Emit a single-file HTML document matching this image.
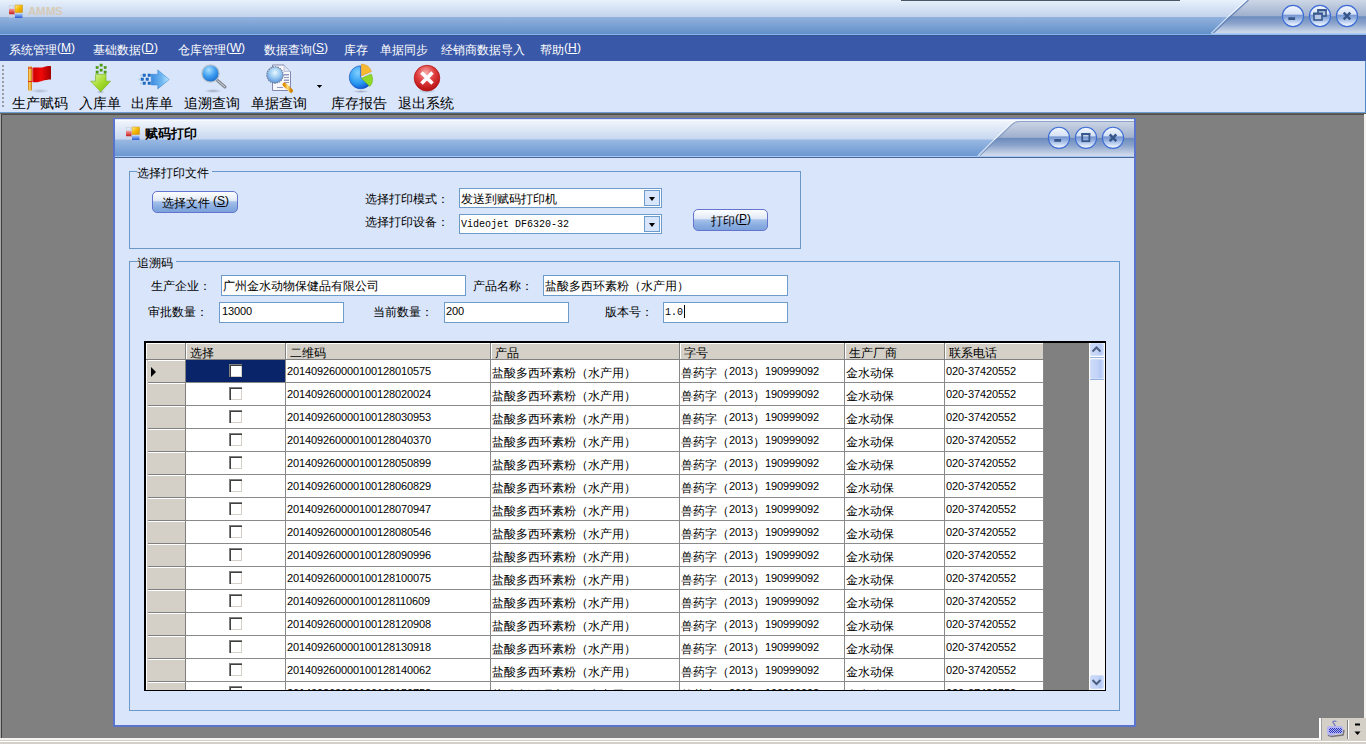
<!DOCTYPE html>
<html><head><meta charset="utf-8">
<style>
@font-face{font-family:"Liberation Sans";src:local("Liberation Sans"),local("LiberationSans");unicode-range:U+0000-2FFF;font-weight:400}
@font-face{font-family:"Liberation Sans";src:local("Liberation Sans"),local("LiberationSans");unicode-range:U+3000-303F,U+4E00-9FFF,U+FF00-FFEF;size-adjust:133%;font-weight:400}
@font-face{font-family:"Liberation Sans";src:local("Liberation Sans Bold"),local("LiberationSans-Bold");unicode-range:U+0000-2FFF;font-weight:700}
@font-face{font-family:"Liberation Sans";src:local("Liberation Sans Bold"),local("LiberationSans-Bold");unicode-range:U+3000-303F,U+4E00-9FFF,U+FF00-FFEF;size-adjust:133%;font-weight:700}
*{margin:0;padding:0;box-sizing:border-box}
html,body{width:1366px;height:744px;overflow:hidden;background:#808080;font-family:"Liberation Sans",sans-serif;font-size:12px;color:#000}
.a{position:absolute}
#title{left:0;top:0;width:1366px;height:34px;background:linear-gradient(#E8F1FC 0px,#C4D4EC 16.5px,#92B2DE 17px,#6290C8 34px)}
#tline1{left:0;top:34px;width:1366px;height:1px;background:#80B6F6}
#tline2{left:0;top:35px;width:1366px;height:1px;background:#3C5488}
#menu{left:0;top:36px;width:1366px;height:25px;background:#3A58A8;color:#fff}
#menu>span{position:absolute;top:8px;white-space:nowrap;font-size:12px;line-height:12px}
#tool{left:0;top:61px;width:1366px;height:51px;background:#D9E5FA}
#tline3{left:0;top:112px;width:1366px;height:1px;background:#6C9CD0}
#tline4{left:0;top:113px;width:1366px;height:2px;background:linear-gradient(#6C6A66,#454545)}
.tl{position:absolute;top:96px;font-size:14px;line-height:14px;white-space:nowrap}
#form{left:113px;top:118px;width:1023px;height:609px;background:#D9E5FA;border:2px solid #5A74CE;border-top:1px solid #5A74CE}
#ftitle{left:115px;top:120px;width:1019px;height:36px;background:linear-gradient(#F2F6FD 0px,#C8D8F0 19px,#98B8E2 20px,#6C98D2 36px)}
.gb{position:absolute;border:1px solid #6A98C8}
.gt{position:absolute;background:#D9E5FA;padding:0 3px 0 0;font-size:12px;line-height:12px;white-space:nowrap}
.lbl{position:absolute;font-size:12px;line-height:12px;white-space:nowrap}
.tb{position:absolute;background:#fff;border:1px solid #6D9BCB;font-size:12px;line-height:12px;padding:4px 0 0 1px;white-space:nowrap}
.dd{width:16px;height:16px;background:#D9E5FA;border:1px solid #6D9BCB}
.dd::after{content:"";position:absolute;left:4px;top:6px;border-left:3.5px solid transparent;border-right:3.5px solid transparent;border-top:4px solid #000}
.btn{position:absolute;border:1px solid #6474CC;border-radius:5px;background:linear-gradient(#FDFEFF 0%,#E2EAF6 42%,#A4C0EA 50%,#88ACE0 78%,#7CA2DC 100%);font-size:12px;line-height:12px;text-align:center;white-space:nowrap}
#grid{left:144px;top:341px;width:962px;height:350px;background:#808080;border-top:2px solid #000;border-left:2px solid #000;border-right:1px solid #000;border-bottom:1px solid #000;overflow:hidden}
.gh{font-size:12px;line-height:12px;white-space:nowrap}
.as{position:relative;top:-2px}
.gd{font-size:12px;line-height:12px;white-space:nowrap}
.gd .n{position:relative;top:-2px}
.n{font-size:10.8px}
.cb{width:13px;height:13px;background:#fff;border-top:1px solid #808080;border-left:1px solid #808080;box-shadow:inset 1px 1px 0 #404040,inset -1px -1px 0 #D4D0C8}
.arrowsel{width:0;height:0;border-top:5px solid transparent;border-bottom:5px solid transparent;border-left:5px solid #000}
.sbb{border-radius:2px;background:linear-gradient(90deg,#CCDAF8,#C4D4F8 50%,#B4CAF4 80%,#C8DAFC);border:1px solid #D0DEF8}
</style></head><body>
<div class="a" id="title"></div>
<div class="a" id="tline1"></div>
<div class="a" id="tline2"></div>
<svg class="a" style="left:0;top:0" width="1366" height="36">
<defs><linearGradient id="icOr" x1="0" y1="0" x2="1" y2="1"><stop offset="0" stop-color="#FFF0A0"/><stop offset=".5" stop-color="#F4B800"/><stop offset="1" stop-color="#D89000"/></linearGradient><linearGradient id="icBl" x1="0" y1="0" x2="0" y2="1"><stop offset="0" stop-color="#A8CCFF"/><stop offset="1" stop-color="#2858D0"/></linearGradient><linearGradient id="icRd" x1="0" y1="0" x2="0" y2="1"><stop offset="0" stop-color="#F89898"/><stop offset="1" stop-color="#C01818"/></linearGradient><linearGradient id="mgbtn" x1="0" y1="0" x2="0" y2="1"><stop offset="0" stop-color="#F4F8FE"/><stop offset=".42" stop-color="#D4E0F4"/><stop offset=".45" stop-color="#7494D0"/><stop offset=".62" stop-color="#94B0E0"/><stop offset=".86" stop-color="#D8E4F8"/><stop offset="1" stop-color="#FAFCFF"/></linearGradient>
<linearGradient id="mgtab" x1="0" y1="0" x2="0" y2="1"><stop offset="0" stop-color="#CDD7E6"/><stop offset=".47" stop-color="#A0B0CE"/><stop offset=".5" stop-color="#6C8CBE"/><stop offset=".7" stop-color="#8CA4CC"/><stop offset=".95" stop-color="#CAD6E8"/><stop offset="1" stop-color="#D0DCEC"/></linearGradient></defs>
<rect x="901" y="0" width="279" height="1" fill="#4A5868"/>
<path d="M1247.5 0 H1366 V33.5 H1212 Q1229 16 1247.5 0 Z" fill="url(#mgtab)"/>
<path d="M1246.5 0 Q1228 16 1211 33.5" fill="none" stroke="#F8FBFF" stroke-width="1"/>
<path d="M1248.5 0 Q1230 16.5 1213 33.5" fill="none" stroke="#5C7CB4" stroke-width="1.1" opacity=".85"/>
<rect x="1212" y="33" width="154" height="1.5" fill="#A8C8F4"/>
<circle cx="1293" cy="16" r="10.6" fill="url(#mgbtn)" stroke="#3C6CD4" stroke-width="1.1"/><rect x="1288.3" y="17.2" width="6.8" height="2.8" fill="#38588C"/><circle cx="1320" cy="16" r="10.6" fill="url(#mgbtn)" stroke="#3C6CD4" stroke-width="1.1"/><rect x="1318" y="10" width="8" height="6" fill="#B8C8E8" stroke="#38588C" stroke-width="1.6"/><rect x="1317.2" y="9.2" width="9.6" height="2" fill="#38588C"/><rect x="1314" y="13.5" width="8" height="6.5" fill="#B8C8E8" stroke="#38588C" stroke-width="1.6"/><rect x="1313.2" y="12.7" width="9.6" height="2" fill="#38588C"/><circle cx="1347" cy="16" r="10.6" fill="url(#mgbtn)" stroke="#3C6CD4" stroke-width="1.1"/><path d="M1343.7 12.7 L1350.3 19.3 M1350.3 12.7 L1343.7 19.3" stroke="#38588C" stroke-width="2.6"/>
<g transform="translate(9,5)"><rect x="0" y="0" width="14" height="14" fill="none"/><rect x="6" y="0" width="7.5" height="7.5" fill="url(#icOr)" stroke="#C89010" stroke-width=".5"/><rect x="6" y="8.5" width="7.5" height="4.5" fill="url(#icBl)"/><rect x="0" y="4" width="5.5" height="5.5" fill="url(#icRd)"/><rect x="0.5" y="0.5" width="4" height="3" fill="none" stroke="#C8CCD8" stroke-width=".6"/><rect x="0.5" y="9.5" width="4" height="3" fill="none" stroke="#C8CCD8" stroke-width=".6"/></g>
<text x="28" y="15" font-family="Liberation Sans" font-size="11" font-weight="bold" fill="#D6CAB6" textLength="34" lengthAdjust="spacingAndGlyphs">AMMS</text>
</svg><div class="a" id="menu">
<span style="left:9px">系统管理<span class="as">(<u>M</u>)</span></span>
<span style="left:93px">基础数据<span class="as">(<u>D</u>)</span></span>
<span style="left:178px">仓库管理<span class="as">(<u>W</u>)</span></span>
<span style="left:264px">数据查询<span class="as">(<u>S</u>)</span></span>
<span style="left:344px">库存</span>
<span style="left:380px">单据同步</span>
<span style="left:441px">经销商数据导入</span>
<span style="left:540px">帮助<span class="as">(<u>H</u>)</span></span>
</div>
<div class="a" id="tool"></div>
<div class="a" id="tline3"></div>
<div class="a" id="tline4"></div>
<svg class="a" style="left:0;top:0" width="460" height="112" viewBox="0 0 460 112">
<defs>
<linearGradient id="gpole" x1="0" x2="1"><stop offset="0" stop-color="#C87800"/><stop offset=".45" stop-color="#FFD870"/><stop offset="1" stop-color="#C87000"/></linearGradient>
<linearGradient id="gflag" x1="0" x2="1"><stop offset="0" stop-color="#F8A0A0"/><stop offset=".12" stop-color="#D00000"/><stop offset=".5" stop-color="#F00808"/><stop offset="1" stop-color="#A00000"/></linearGradient>
<radialGradient id="gshadow"><stop offset="0" stop-color="#8090A8" stop-opacity=".7"/><stop offset="1" stop-color="#8090A8" stop-opacity="0"/></radialGradient>
<linearGradient id="ggreen" x1="0" y1="0" x2="1" y2="1"><stop offset="0" stop-color="#D8F4A8"/><stop offset=".5" stop-color="#A8DC30"/><stop offset="1" stop-color="#70B800"/></linearGradient>
<linearGradient id="gblue" x1="0" x2="1"><stop offset="0" stop-color="#3C8CE0"/><stop offset=".6" stop-color="#70B8F0"/><stop offset="1" stop-color="#C0ECFF"/></linearGradient>
<radialGradient id="gglass" cx=".4" cy=".3" r=".8"><stop offset="0" stop-color="#A8E0FF"/><stop offset=".5" stop-color="#3C9CF0"/><stop offset="1" stop-color="#1060C0"/></radialGradient>
<radialGradient id="gglass2" cx=".5" cy=".35" r=".7"><stop offset="0" stop-color="#E8F8FF"/><stop offset=".5" stop-color="#98C8F0"/><stop offset="1" stop-color="#4C88D8"/></radialGradient>
<linearGradient id="ghandle" x1="0" x2="1"><stop offset="0" stop-color="#E09000"/><stop offset=".5" stop-color="#FFE080"/><stop offset="1" stop-color="#D08000"/></linearGradient>
<radialGradient id="gpie" cx=".4" cy=".3" r=".8"><stop offset="0" stop-color="#80D0FF"/><stop offset=".6" stop-color="#2898F0"/><stop offset="1" stop-color="#0848C8"/></radialGradient>
<radialGradient id="gred" cx=".45" cy=".3" r=".75"><stop offset="0" stop-color="#F8B0B0"/><stop offset=".45" stop-color="#E04040"/><stop offset="1" stop-color="#B00808"/></radialGradient>
</defs>
<!-- grip -->
<g fill="#9A9CA4"><rect x="2" y="65" width="2" height="2"/><rect x="2" y="69" width="2" height="2"/><rect x="2" y="73" width="2" height="2"/><rect x="2" y="77" width="2" height="2"/><rect x="2" y="81" width="2" height="2"/><rect x="2" y="85" width="2" height="2"/><rect x="2" y="89" width="2" height="2"/><rect x="2" y="93" width="2" height="2"/><rect x="2" y="97" width="2" height="2"/><rect x="2" y="101" width="2" height="2"/><rect x="2" y="105" width="2" height="2"/></g>
<!-- flag -->
<ellipse cx="40" cy="91" rx="10" ry="2.2" fill="url(#gshadow)" opacity=".7"/>
<path d="M31.5 68 C36 66.5 40 68.5 44 67 C47 66 49 66 51 66.2 L51 79.4 C48 79.5 45 79.8 42 81 C38 82.5 35 82.5 31.5 82 Z" fill="url(#gflag)"/>
<rect x="28" y="66" width="4" height="25" rx="2" fill="url(#gpole)"/>
<rect x="28" y="67.5" width="4" height="1" fill="#E02020"/><rect x="28" y="81" width="4" height="1" fill="#E02020"/>
<!-- green arrow -->
<g fill="#58A810" stroke="#3C8800" stroke-width=".5"><rect x="100" y="64" width="2.2" height="2.2"/><rect x="96" y="66.5" width="2.2" height="2.2"/><rect x="104" y="66.5" width="2.2" height="2.2"/><rect x="100" y="69" width="2.2" height="2.2"/><rect x="96" y="71" width="2.2" height="2.2"/><rect x="104" y="71" width="2.2" height="2.2"/></g>
<ellipse cx="100.5" cy="92" rx="4" ry="1.5" fill="url(#gshadow)"/>
<path d="M95.5 74.3 H106 V81.2 H110.5 L100.8 91.8 L90.6 81.2 H95.5 Z" fill="url(#ggreen)" stroke="#70B010" stroke-width=".6"/>
<!-- blue arrow -->
<g fill="#2070C8" stroke="#105CB0" stroke-width=".5"><rect x="143" y="74" width="2.5" height="2.5"/><rect x="148" y="74" width="2.5" height="2.5"/><rect x="141" y="78" width="2.5" height="2.5"/><rect x="146" y="78" width="2.5" height="2.5"/><rect x="143" y="82" width="2.5" height="2.5"/><rect x="148" y="82" width="2.5" height="2.5"/></g><g fill="#B8D0F0"><rect x="140" y="74.5" width="2" height="2"/><rect x="138.5" y="78.5" width="2" height="2"/><rect x="140" y="82.5" width="2" height="2"/></g>
<path d="M151.2 74.3 H157.8 V69.9 L169.2 79.5 L157.8 88.9 V84.9 H151.2 Z" fill="url(#gblue)" stroke="#3C88D8" stroke-width=".6"/>
<!-- magnifier -->
<ellipse cx="213" cy="91" rx="9" ry="2" fill="url(#gshadow)"/>
<line x1="217.5" y1="80.5" x2="225" y2="87" stroke="#808890" stroke-width="3" stroke-linecap="round"/>
<line x1="217.5" y1="80.5" x2="225" y2="87" stroke="#D8DCE0" stroke-width="1"/>
<circle cx="210.5" cy="73.5" r="8.6" fill="url(#gglass)" stroke="#B8C0C8" stroke-width="1.2"/>
<!-- doc magnifier -->
<path d="M272.5 65 H284 L290.5 71.5 V90.5 H272.5 Z" fill="#F8F8FC" stroke="#8088B0" stroke-width="1"/>
<path d="M284 65 V71.5 H290.5" fill="#E0E4F0" stroke="#A0A8C8" stroke-width=".6"/>
<g fill="#9098C0"><rect x="284" y="74" width="5" height="1.5"/><rect x="284" y="77" width="5" height="1"/><rect x="284" y="79.5" width="5" height="1.5"/><rect x="284" y="82" width="5" height="1"/><rect x="277" y="87" width="6" height="1"/></g>
<circle cx="275" cy="75" r="8.2" fill="url(#gglass2)" stroke="#707890" stroke-width="1.1" stroke-dasharray="1.6 .8"/>
<line x1="284.5" y1="84.5" x2="291" y2="90.8" stroke="url(#ghandle)" stroke-width="4" stroke-linecap="round"/>
<path d="M316.8 85 H322.2 L319.5 88 Z" fill="#000"/>
<!-- pie -->
<ellipse cx="361" cy="91.5" rx="9" ry="1.5" fill="url(#gshadow)"/>
<path d="M360.5 77.3 V65.8 A11.5 11.5 0 1 0 370.5 83.5 Z" fill="url(#gpie)" stroke="#0840B8" stroke-width=".6"/>
<path d="M361.5 76 V64 A11.5 11.5 0 0 1 371.5 71.5 Z" fill="#F8B830" stroke="#D89010" stroke-width=".5"/>
<path d="M361.5 78.3 L371.2 74 A11 11 0 0 1 369.8 86.5 Z" fill="#90D828" stroke="#60B010" stroke-width=".5"/>
<!-- red x -->
<ellipse cx="427" cy="91" rx="9" ry="2" fill="url(#gshadow)"/>
<circle cx="427" cy="78.1" r="12.8" fill="url(#gred)" stroke="#B81818" stroke-width=".8"/>
<path d="M421.5 72.6 L432.5 83.6 M432.5 72.6 L421.5 83.6" stroke="#fff" stroke-width="3.6" stroke-linecap="butt"/>
</svg>
<div class="tl" style="left:12px">生产赋码</div>
<div class="tl" style="left:79px">入库单</div>
<div class="tl" style="left:131px">出库单</div>
<div class="tl" style="left:184px">追溯查询</div>
<div class="tl" style="left:251px">单据查询</div>
<div class="tl" style="left:331px">库存报告</div>
<div class="tl" style="left:398px">退出系统</div>

<div class="a" style="left:1365px;top:61px;width:1px;height:51px;background:#5088C8"></div>
<div class="a" style="left:1px;top:115px;width:1px;height:623px;background:#404040"></div>
<div class="a" style="left:0px;top:114px;width:1px;height:624px;background:#A8A8A8"></div>
<div class="a" style="left:1364px;top:114px;width:2px;height:604px;background:#F4F2EE"></div>
<div class="a" style="left:0;top:738px;width:1366px;height:2px;background:#F6F4F0"></div>
<div class="a" style="left:0;top:740px;width:1366px;height:1px;background:#D4D0C8"></div>
<div class="a" style="left:0;top:741px;width:1366px;height:1px;background:#FFFFFF"></div>
<div class="a" style="left:0;top:742px;width:1366px;height:2px;background:#D4D0C8"></div>
<div class="a" style="left:1319px;top:718px;width:47px;height:22px;background:#D4D0C8"></div>
<div class="a" style="left:1319px;top:718px;width:2px;height:22px;background:#FFFFFF"></div>
<div class="a" style="left:1321px;top:718px;width:1px;height:22px;background:#A0A0A0"></div>
<div class="a" style="left:1347px;top:720px;width:1px;height:19px;background:#808080"></div>
<div class="a" style="left:1348px;top:720px;width:1px;height:19px;background:#FFFFFF"></div>
<svg class="a" style="left:1320px;top:716px" width="46" height="24" viewBox="1320 716 46 24">
<path d="M1335.5 726 Q1334 724 1333 722.5 Q1332.5 721 1334.5 721 L1336.5 721.5" fill="none" stroke="#6870C0" stroke-width="1.1"/>
<path d="M1328 735 Q1331 737 1335 736 L1343 735 L1344 730" fill="none" stroke="#505058" stroke-width="1.6" opacity=".7"/>
<path d="M1327 728 Q1327 726 1329 726 L1341 726 Q1343 726 1343 728 L1343 732 Q1343 734 1340 734 L1336 734 Q1333 736 1330 735.5 Q1327 735 1327 732 Z" fill="#B4B4F4"/>
<g fill="#2838B8"><rect x="1330" y="728" width="1" height="1"/><rect x="1332" y="728" width="1" height="1"/><rect x="1334" y="728" width="1" height="1"/><rect x="1336" y="728" width="1" height="1"/><rect x="1338" y="728" width="1" height="1"/><rect x="1340" y="728" width="1" height="1"/><rect x="1329" y="729" width="1" height="1"/><rect x="1331" y="729" width="1" height="1"/><rect x="1333" y="729" width="1" height="1"/><rect x="1335" y="729" width="1" height="1"/><rect x="1337" y="729" width="1" height="1"/><rect x="1339" y="729" width="1" height="1"/><rect x="1341" y="729" width="1" height="1"/><rect x="1330" y="730" width="1" height="1"/><rect x="1332" y="730" width="1" height="1"/><rect x="1334" y="730" width="1" height="1"/><rect x="1336" y="730" width="1" height="1"/><rect x="1338" y="730" width="1" height="1"/><rect x="1340" y="730" width="1" height="1"/><rect x="1329" y="731" width="1" height="1"/><rect x="1331" y="731" width="1" height="1"/><rect x="1333" y="731" width="1" height="1"/><rect x="1335" y="731" width="1" height="1"/><rect x="1337" y="731" width="1" height="1"/><rect x="1339" y="731" width="1" height="1"/><rect x="1341" y="731" width="1" height="1"/><rect x="1330" y="732" width="1" height="1"/><rect x="1332" y="732" width="1" height="1"/><rect x="1334" y="732" width="1" height="1"/><rect x="1336" y="732" width="1" height="1"/><rect x="1338" y="732" width="1" height="1"/><rect x="1340" y="732" width="1" height="1"/></g>
<rect x="1355" y="723.5" width="5" height="2" fill="#000"/>
<path d="M1354.5 731.5 H1360.5 L1357.5 735 Z" fill="#000"/>
</svg>
<div class="a" id="form"></div>
<div class="a" id="ftitle"></div><svg class="a" style="left:115px;top:120px" width="1019" height="37" viewBox="115 120 1019 37">
<defs><linearGradient id="fgbtn" x1="0" y1="0" x2="0" y2="1"><stop offset="0" stop-color="#F4F8FE"/><stop offset=".42" stop-color="#D4E0F4"/><stop offset=".45" stop-color="#7494D0"/><stop offset=".62" stop-color="#94B0E0"/><stop offset=".86" stop-color="#D8E4F8"/><stop offset="1" stop-color="#FAFCFF"/></linearGradient>
<linearGradient id="fgtab" x1="0" y1="0" x2="0" y2="1"><stop offset="0" stop-color="#CDD7E6"/><stop offset=".47" stop-color="#A0B0CE"/><stop offset=".5" stop-color="#6C8CBE"/><stop offset=".7" stop-color="#8CA4CC"/><stop offset=".95" stop-color="#CAD6E8"/><stop offset="1" stop-color="#D0DCEC"/></linearGradient></defs>
<path d="M978.5 156 L1011 124.3 Q1014.5 120.8 1019.5 120.8 H1134 V156 Z" fill="url(#fgtab)"/>
<path d="M977.5 156 L1010.2 123.8 Q1014 120 1019.5 120" fill="none" stroke="#F8FBFF" stroke-width="1"/>
<path d="M979.8 156 L1011.8 124.8 Q1015 121.5 1019.5 121.3 H1134" fill="none" stroke="#6C88B8" stroke-width="1" opacity=".8"/>
<rect x="115" y="120" width="1019" height="1" fill="#F8FBFF" opacity=".8"/>
<circle cx="1059" cy="137.8" r="10.6" fill="url(#fgbtn)" stroke="#3C6CD4" stroke-width="1.1"/><rect x="1054.3" y="139.0" width="6.8" height="2.8" fill="#38588C"/><circle cx="1086" cy="137.8" r="10.6" fill="url(#fgbtn)" stroke="#3C6CD4" stroke-width="1.1"/><rect x="1082.2" y="134.0" width="7.2" height="7.2" fill="none" stroke="#38588C" stroke-width="1.8"/><rect x="1081.3" y="133.10000000000002" width="9" height="2" fill="#38588C"/><circle cx="1113" cy="137.8" r="10.6" fill="url(#fgbtn)" stroke="#3C6CD4" stroke-width="1.1"/><path d="M1109.7 134.5 L1116.3 141.10000000000002 M1116.3 134.5 L1109.7 141.10000000000002" stroke="#38588C" stroke-width="2.6"/>
<g transform="translate(126,127)"><rect x="6" y="0" width="7.5" height="7.5" fill="url(#icOr)" stroke="#C89010" stroke-width=".5"/><rect x="6" y="8.5" width="7.5" height="4.5" fill="url(#icBl)"/><rect x="0" y="4" width="5.5" height="5.5" fill="url(#icRd)"/><rect x="0.5" y="0.5" width="4" height="3" fill="none" stroke="#C8CCD8" stroke-width=".6"/><rect x="0.5" y="9.5" width="4" height="3" fill="none" stroke="#C8CCD8" stroke-width=".6"/></g>
</svg>
<div class="a" style="left:145px;top:127px;font-size:13px;line-height:14px;font-weight:bold;white-space:nowrap">赋码打印</div>
<div class="a" style="left:115px;top:156px;width:1019px;height:1px;background:#A8C8F4"></div>
<div class="a" style="left:115px;top:157px;width:1019px;height:1px;background:#4A6898"></div>


<div class="gb" style="left:129px;top:171px;width:672px;height:78px"></div>
<div class="gt" style="left:137px;top:167px">选择打印文件</div>
<div class="btn" style="left:152px;top:191px;width:86px;height:22px;padding-top:5px;padding-left:1px">选择文件 <span class="as">(<u>S</u>)</span></div>
<div class="lbl" style="left:365px;top:193px">选择打印模式：</div>
<div class="lbl" style="left:365px;top:216px">选择打印设备：</div>
<div class="tb" style="left:459px;top:188px;width:203px;height:20px">发送到赋码打印机</div>
<div class="tb" style="left:459px;top:214px;width:203px;height:20px;font-family:'Liberation Mono',monospace;font-size:10px;padding-top:4px">Videojet DF6320-32</div>
<div class="a dd" style="left:644px;top:190px"></div>
<div class="a dd" style="left:644px;top:216px"></div>
<div class="btn" style="left:693px;top:209px;width:75px;height:22px;padding-top:5px">打印<span class="as">(<u>P</u>)</span></div>

<div class="gb" style="left:129px;top:261px;width:991px;height:450px"></div>
<div class="gt" style="left:137px;top:257px">追溯码</div>
<div class="lbl" style="left:151px;top:280px">生产企业：</div>
<div class="tb" style="left:221px;top:275px;width:245px;height:21px">广州金水动物保健品有限公司</div>
<div class="lbl" style="left:473px;top:280px">产品名称：</div>
<div class="tb" style="left:543px;top:275px;width:245px;height:21px">盐酸多西环素粉（水产用）</div>
<div class="lbl" style="left:148px;top:306px">审批数量：</div>
<div class="tb" style="left:219px;top:302px;width:125px;height:21px;font-size:11px;padding-top:2px;padding-left:2px">13000</div>
<div class="lbl" style="left:373px;top:306px">当前数量：</div>
<div class="tb" style="left:444px;top:302px;width:125px;height:21px;font-size:11px;padding-top:2px">200</div>
<div class="lbl" style="left:605px;top:306px">版本号：</div>
<div class="tb" style="left:663px;top:302px;width:125px;height:21px;font-family:'Liberation Mono',monospace;font-size:10px;padding-top:2px">1.0<span style="display:inline-block;width:1px;height:13px;background:#000;vertical-align:-3px;margin-left:1px"></span></div>

<div class="a" id="grid"><div class="a" style="left:0px;top:0px;width:898px;height:17px;background:#D4D0C8"></div><div class="a" style="left:0px;top:0px;width:898px;height:1px;background:#FFFFFF"></div><div class="a" style="left:0px;top:16px;width:898px;height:1px;background:#808080"></div><div class="a" style="left:0px;top:0px;width:1px;height:16px;background:#FFFFFF"></div><div class="a" style="left:39px;top:0px;width:1px;height:16px;background:#808080"></div><div class="a" style="left:40px;top:0px;width:1px;height:16px;background:#FFFFFF"></div><div class="a" style="left:139px;top:0px;width:1px;height:16px;background:#808080"></div><div class="a" style="left:140px;top:0px;width:1px;height:16px;background:#FFFFFF"></div><div class="a" style="left:344px;top:0px;width:1px;height:16px;background:#808080"></div><div class="a" style="left:345px;top:0px;width:1px;height:16px;background:#FFFFFF"></div><div class="a" style="left:533px;top:0px;width:1px;height:16px;background:#808080"></div><div class="a" style="left:534px;top:0px;width:1px;height:16px;background:#FFFFFF"></div><div class="a" style="left:698px;top:0px;width:1px;height:16px;background:#808080"></div><div class="a" style="left:699px;top:0px;width:1px;height:16px;background:#FFFFFF"></div><div class="a" style="left:798px;top:0px;width:1px;height:16px;background:#808080"></div><div class="a" style="left:799px;top:0px;width:1px;height:16px;background:#FFFFFF"></div><div class="a" style="left:897px;top:0px;width:1px;height:16px;background:#808080"></div><div class="a gh" style="left:44px;top:4px">选择</div><div class="a gh" style="left:144px;top:4px">二维码</div><div class="a gh" style="left:349px;top:4px">产品</div><div class="a gh" style="left:538px;top:4px">字号</div><div class="a gh" style="left:703px;top:4px">生产厂商</div><div class="a gh" style="left:803px;top:4px">联系电话</div><div class="a" style="left:0px;top:17px;width:39px;height:23px;background:#D4D0C8"></div><div class="a" style="left:2px;top:17px;width:37px;height:1px;background:#FFFFFF"></div><div class="a" style="left:0px;top:17px;width:1px;height:23px;background:#FFFFFF"></div><div class="a" style="left:2px;top:39px;width:37px;height:1px;background:#808080"></div><div class="a" style="left:39px;top:17px;width:1px;height:23px;background:#808080"></div><div class="a" style="left:40px;top:17px;width:857px;height:22px;background:#FFFFFF"></div><div class="a" style="left:40px;top:17px;width:99px;height:22px;background:#0A246A"></div><div class="a" style="left:40px;top:39px;width:858px;height:1px;background:#8A8A8A"></div><div class="a" style="left:139px;top:17px;width:1px;height:23px;background:#8A8A8A"></div><div class="a" style="left:344px;top:17px;width:1px;height:23px;background:#8A8A8A"></div><div class="a" style="left:533px;top:17px;width:1px;height:23px;background:#8A8A8A"></div><div class="a" style="left:698px;top:17px;width:1px;height:23px;background:#8A8A8A"></div><div class="a" style="left:798px;top:17px;width:1px;height:23px;background:#8A8A8A"></div><div class="a" style="left:897px;top:17px;width:1px;height:23px;background:#8A8A8A"></div><div class="a cb" style="left:83px;top:21px"></div><div class="a gd n" style="left:141px;top:22px">201409260000100128010575</div><div class="a gd" style="left:346px;top:24px">盐酸多西环素粉（水产用）</div><div class="a gd" style="left:535px;top:24px">兽药字（<span class="n">2013</span>）<span class="n">190999092</span></div><div class="a gd" style="left:700px;top:24px">金水动保</div><div class="a gd n" style="left:800px;top:22px">020-37420552</div><div class="a" style="left:0px;top:40px;width:39px;height:23px;background:#D4D0C8"></div><div class="a" style="left:2px;top:40px;width:37px;height:1px;background:#FFFFFF"></div><div class="a" style="left:0px;top:40px;width:1px;height:23px;background:#FFFFFF"></div><div class="a" style="left:2px;top:62px;width:37px;height:1px;background:#808080"></div><div class="a" style="left:39px;top:40px;width:1px;height:23px;background:#808080"></div><div class="a" style="left:40px;top:40px;width:857px;height:22px;background:#FFFFFF"></div><div class="a" style="left:40px;top:62px;width:858px;height:1px;background:#8A8A8A"></div><div class="a" style="left:139px;top:40px;width:1px;height:23px;background:#8A8A8A"></div><div class="a" style="left:344px;top:40px;width:1px;height:23px;background:#8A8A8A"></div><div class="a" style="left:533px;top:40px;width:1px;height:23px;background:#8A8A8A"></div><div class="a" style="left:698px;top:40px;width:1px;height:23px;background:#8A8A8A"></div><div class="a" style="left:798px;top:40px;width:1px;height:23px;background:#8A8A8A"></div><div class="a" style="left:897px;top:40px;width:1px;height:23px;background:#8A8A8A"></div><div class="a cb" style="left:83px;top:44px"></div><div class="a gd n" style="left:141px;top:45px">201409260000100128020024</div><div class="a gd" style="left:346px;top:47px">盐酸多西环素粉（水产用）</div><div class="a gd" style="left:535px;top:47px">兽药字（<span class="n">2013</span>）<span class="n">190999092</span></div><div class="a gd" style="left:700px;top:47px">金水动保</div><div class="a gd n" style="left:800px;top:45px">020-37420552</div><div class="a" style="left:0px;top:63px;width:39px;height:23px;background:#D4D0C8"></div><div class="a" style="left:2px;top:63px;width:37px;height:1px;background:#FFFFFF"></div><div class="a" style="left:0px;top:63px;width:1px;height:23px;background:#FFFFFF"></div><div class="a" style="left:2px;top:85px;width:37px;height:1px;background:#808080"></div><div class="a" style="left:39px;top:63px;width:1px;height:23px;background:#808080"></div><div class="a" style="left:40px;top:63px;width:857px;height:22px;background:#FFFFFF"></div><div class="a" style="left:40px;top:85px;width:858px;height:1px;background:#8A8A8A"></div><div class="a" style="left:139px;top:63px;width:1px;height:23px;background:#8A8A8A"></div><div class="a" style="left:344px;top:63px;width:1px;height:23px;background:#8A8A8A"></div><div class="a" style="left:533px;top:63px;width:1px;height:23px;background:#8A8A8A"></div><div class="a" style="left:698px;top:63px;width:1px;height:23px;background:#8A8A8A"></div><div class="a" style="left:798px;top:63px;width:1px;height:23px;background:#8A8A8A"></div><div class="a" style="left:897px;top:63px;width:1px;height:23px;background:#8A8A8A"></div><div class="a cb" style="left:83px;top:67px"></div><div class="a gd n" style="left:141px;top:68px">201409260000100128030953</div><div class="a gd" style="left:346px;top:70px">盐酸多西环素粉（水产用）</div><div class="a gd" style="left:535px;top:70px">兽药字（<span class="n">2013</span>）<span class="n">190999092</span></div><div class="a gd" style="left:700px;top:70px">金水动保</div><div class="a gd n" style="left:800px;top:68px">020-37420552</div><div class="a" style="left:0px;top:86px;width:39px;height:23px;background:#D4D0C8"></div><div class="a" style="left:2px;top:86px;width:37px;height:1px;background:#FFFFFF"></div><div class="a" style="left:0px;top:86px;width:1px;height:23px;background:#FFFFFF"></div><div class="a" style="left:2px;top:108px;width:37px;height:1px;background:#808080"></div><div class="a" style="left:39px;top:86px;width:1px;height:23px;background:#808080"></div><div class="a" style="left:40px;top:86px;width:857px;height:22px;background:#FFFFFF"></div><div class="a" style="left:40px;top:108px;width:858px;height:1px;background:#8A8A8A"></div><div class="a" style="left:139px;top:86px;width:1px;height:23px;background:#8A8A8A"></div><div class="a" style="left:344px;top:86px;width:1px;height:23px;background:#8A8A8A"></div><div class="a" style="left:533px;top:86px;width:1px;height:23px;background:#8A8A8A"></div><div class="a" style="left:698px;top:86px;width:1px;height:23px;background:#8A8A8A"></div><div class="a" style="left:798px;top:86px;width:1px;height:23px;background:#8A8A8A"></div><div class="a" style="left:897px;top:86px;width:1px;height:23px;background:#8A8A8A"></div><div class="a cb" style="left:83px;top:90px"></div><div class="a gd n" style="left:141px;top:91px">201409260000100128040370</div><div class="a gd" style="left:346px;top:93px">盐酸多西环素粉（水产用）</div><div class="a gd" style="left:535px;top:93px">兽药字（<span class="n">2013</span>）<span class="n">190999092</span></div><div class="a gd" style="left:700px;top:93px">金水动保</div><div class="a gd n" style="left:800px;top:91px">020-37420552</div><div class="a" style="left:0px;top:109px;width:39px;height:23px;background:#D4D0C8"></div><div class="a" style="left:2px;top:109px;width:37px;height:1px;background:#FFFFFF"></div><div class="a" style="left:0px;top:109px;width:1px;height:23px;background:#FFFFFF"></div><div class="a" style="left:2px;top:131px;width:37px;height:1px;background:#808080"></div><div class="a" style="left:39px;top:109px;width:1px;height:23px;background:#808080"></div><div class="a" style="left:40px;top:109px;width:857px;height:22px;background:#FFFFFF"></div><div class="a" style="left:40px;top:131px;width:858px;height:1px;background:#8A8A8A"></div><div class="a" style="left:139px;top:109px;width:1px;height:23px;background:#8A8A8A"></div><div class="a" style="left:344px;top:109px;width:1px;height:23px;background:#8A8A8A"></div><div class="a" style="left:533px;top:109px;width:1px;height:23px;background:#8A8A8A"></div><div class="a" style="left:698px;top:109px;width:1px;height:23px;background:#8A8A8A"></div><div class="a" style="left:798px;top:109px;width:1px;height:23px;background:#8A8A8A"></div><div class="a" style="left:897px;top:109px;width:1px;height:23px;background:#8A8A8A"></div><div class="a cb" style="left:83px;top:113px"></div><div class="a gd n" style="left:141px;top:114px">201409260000100128050899</div><div class="a gd" style="left:346px;top:116px">盐酸多西环素粉（水产用）</div><div class="a gd" style="left:535px;top:116px">兽药字（<span class="n">2013</span>）<span class="n">190999092</span></div><div class="a gd" style="left:700px;top:116px">金水动保</div><div class="a gd n" style="left:800px;top:114px">020-37420552</div><div class="a" style="left:0px;top:132px;width:39px;height:23px;background:#D4D0C8"></div><div class="a" style="left:2px;top:132px;width:37px;height:1px;background:#FFFFFF"></div><div class="a" style="left:0px;top:132px;width:1px;height:23px;background:#FFFFFF"></div><div class="a" style="left:2px;top:154px;width:37px;height:1px;background:#808080"></div><div class="a" style="left:39px;top:132px;width:1px;height:23px;background:#808080"></div><div class="a" style="left:40px;top:132px;width:857px;height:22px;background:#FFFFFF"></div><div class="a" style="left:40px;top:154px;width:858px;height:1px;background:#8A8A8A"></div><div class="a" style="left:139px;top:132px;width:1px;height:23px;background:#8A8A8A"></div><div class="a" style="left:344px;top:132px;width:1px;height:23px;background:#8A8A8A"></div><div class="a" style="left:533px;top:132px;width:1px;height:23px;background:#8A8A8A"></div><div class="a" style="left:698px;top:132px;width:1px;height:23px;background:#8A8A8A"></div><div class="a" style="left:798px;top:132px;width:1px;height:23px;background:#8A8A8A"></div><div class="a" style="left:897px;top:132px;width:1px;height:23px;background:#8A8A8A"></div><div class="a cb" style="left:83px;top:136px"></div><div class="a gd n" style="left:141px;top:137px">201409260000100128060829</div><div class="a gd" style="left:346px;top:139px">盐酸多西环素粉（水产用）</div><div class="a gd" style="left:535px;top:139px">兽药字（<span class="n">2013</span>）<span class="n">190999092</span></div><div class="a gd" style="left:700px;top:139px">金水动保</div><div class="a gd n" style="left:800px;top:137px">020-37420552</div><div class="a" style="left:0px;top:155px;width:39px;height:23px;background:#D4D0C8"></div><div class="a" style="left:2px;top:155px;width:37px;height:1px;background:#FFFFFF"></div><div class="a" style="left:0px;top:155px;width:1px;height:23px;background:#FFFFFF"></div><div class="a" style="left:2px;top:177px;width:37px;height:1px;background:#808080"></div><div class="a" style="left:39px;top:155px;width:1px;height:23px;background:#808080"></div><div class="a" style="left:40px;top:155px;width:857px;height:22px;background:#FFFFFF"></div><div class="a" style="left:40px;top:177px;width:858px;height:1px;background:#8A8A8A"></div><div class="a" style="left:139px;top:155px;width:1px;height:23px;background:#8A8A8A"></div><div class="a" style="left:344px;top:155px;width:1px;height:23px;background:#8A8A8A"></div><div class="a" style="left:533px;top:155px;width:1px;height:23px;background:#8A8A8A"></div><div class="a" style="left:698px;top:155px;width:1px;height:23px;background:#8A8A8A"></div><div class="a" style="left:798px;top:155px;width:1px;height:23px;background:#8A8A8A"></div><div class="a" style="left:897px;top:155px;width:1px;height:23px;background:#8A8A8A"></div><div class="a cb" style="left:83px;top:159px"></div><div class="a gd n" style="left:141px;top:160px">201409260000100128070947</div><div class="a gd" style="left:346px;top:162px">盐酸多西环素粉（水产用）</div><div class="a gd" style="left:535px;top:162px">兽药字（<span class="n">2013</span>）<span class="n">190999092</span></div><div class="a gd" style="left:700px;top:162px">金水动保</div><div class="a gd n" style="left:800px;top:160px">020-37420552</div><div class="a" style="left:0px;top:178px;width:39px;height:23px;background:#D4D0C8"></div><div class="a" style="left:2px;top:178px;width:37px;height:1px;background:#FFFFFF"></div><div class="a" style="left:0px;top:178px;width:1px;height:23px;background:#FFFFFF"></div><div class="a" style="left:2px;top:200px;width:37px;height:1px;background:#808080"></div><div class="a" style="left:39px;top:178px;width:1px;height:23px;background:#808080"></div><div class="a" style="left:40px;top:178px;width:857px;height:22px;background:#FFFFFF"></div><div class="a" style="left:40px;top:200px;width:858px;height:1px;background:#8A8A8A"></div><div class="a" style="left:139px;top:178px;width:1px;height:23px;background:#8A8A8A"></div><div class="a" style="left:344px;top:178px;width:1px;height:23px;background:#8A8A8A"></div><div class="a" style="left:533px;top:178px;width:1px;height:23px;background:#8A8A8A"></div><div class="a" style="left:698px;top:178px;width:1px;height:23px;background:#8A8A8A"></div><div class="a" style="left:798px;top:178px;width:1px;height:23px;background:#8A8A8A"></div><div class="a" style="left:897px;top:178px;width:1px;height:23px;background:#8A8A8A"></div><div class="a cb" style="left:83px;top:182px"></div><div class="a gd n" style="left:141px;top:183px">201409260000100128080546</div><div class="a gd" style="left:346px;top:185px">盐酸多西环素粉（水产用）</div><div class="a gd" style="left:535px;top:185px">兽药字（<span class="n">2013</span>）<span class="n">190999092</span></div><div class="a gd" style="left:700px;top:185px">金水动保</div><div class="a gd n" style="left:800px;top:183px">020-37420552</div><div class="a" style="left:0px;top:201px;width:39px;height:23px;background:#D4D0C8"></div><div class="a" style="left:2px;top:201px;width:37px;height:1px;background:#FFFFFF"></div><div class="a" style="left:0px;top:201px;width:1px;height:23px;background:#FFFFFF"></div><div class="a" style="left:2px;top:223px;width:37px;height:1px;background:#808080"></div><div class="a" style="left:39px;top:201px;width:1px;height:23px;background:#808080"></div><div class="a" style="left:40px;top:201px;width:857px;height:22px;background:#FFFFFF"></div><div class="a" style="left:40px;top:223px;width:858px;height:1px;background:#8A8A8A"></div><div class="a" style="left:139px;top:201px;width:1px;height:23px;background:#8A8A8A"></div><div class="a" style="left:344px;top:201px;width:1px;height:23px;background:#8A8A8A"></div><div class="a" style="left:533px;top:201px;width:1px;height:23px;background:#8A8A8A"></div><div class="a" style="left:698px;top:201px;width:1px;height:23px;background:#8A8A8A"></div><div class="a" style="left:798px;top:201px;width:1px;height:23px;background:#8A8A8A"></div><div class="a" style="left:897px;top:201px;width:1px;height:23px;background:#8A8A8A"></div><div class="a cb" style="left:83px;top:205px"></div><div class="a gd n" style="left:141px;top:206px">201409260000100128090996</div><div class="a gd" style="left:346px;top:208px">盐酸多西环素粉（水产用）</div><div class="a gd" style="left:535px;top:208px">兽药字（<span class="n">2013</span>）<span class="n">190999092</span></div><div class="a gd" style="left:700px;top:208px">金水动保</div><div class="a gd n" style="left:800px;top:206px">020-37420552</div><div class="a" style="left:0px;top:224px;width:39px;height:23px;background:#D4D0C8"></div><div class="a" style="left:2px;top:224px;width:37px;height:1px;background:#FFFFFF"></div><div class="a" style="left:0px;top:224px;width:1px;height:23px;background:#FFFFFF"></div><div class="a" style="left:2px;top:246px;width:37px;height:1px;background:#808080"></div><div class="a" style="left:39px;top:224px;width:1px;height:23px;background:#808080"></div><div class="a" style="left:40px;top:224px;width:857px;height:22px;background:#FFFFFF"></div><div class="a" style="left:40px;top:246px;width:858px;height:1px;background:#8A8A8A"></div><div class="a" style="left:139px;top:224px;width:1px;height:23px;background:#8A8A8A"></div><div class="a" style="left:344px;top:224px;width:1px;height:23px;background:#8A8A8A"></div><div class="a" style="left:533px;top:224px;width:1px;height:23px;background:#8A8A8A"></div><div class="a" style="left:698px;top:224px;width:1px;height:23px;background:#8A8A8A"></div><div class="a" style="left:798px;top:224px;width:1px;height:23px;background:#8A8A8A"></div><div class="a" style="left:897px;top:224px;width:1px;height:23px;background:#8A8A8A"></div><div class="a cb" style="left:83px;top:228px"></div><div class="a gd n" style="left:141px;top:229px">201409260000100128100075</div><div class="a gd" style="left:346px;top:231px">盐酸多西环素粉（水产用）</div><div class="a gd" style="left:535px;top:231px">兽药字（<span class="n">2013</span>）<span class="n">190999092</span></div><div class="a gd" style="left:700px;top:231px">金水动保</div><div class="a gd n" style="left:800px;top:229px">020-37420552</div><div class="a" style="left:0px;top:247px;width:39px;height:23px;background:#D4D0C8"></div><div class="a" style="left:2px;top:247px;width:37px;height:1px;background:#FFFFFF"></div><div class="a" style="left:0px;top:247px;width:1px;height:23px;background:#FFFFFF"></div><div class="a" style="left:2px;top:269px;width:37px;height:1px;background:#808080"></div><div class="a" style="left:39px;top:247px;width:1px;height:23px;background:#808080"></div><div class="a" style="left:40px;top:247px;width:857px;height:22px;background:#FFFFFF"></div><div class="a" style="left:40px;top:269px;width:858px;height:1px;background:#8A8A8A"></div><div class="a" style="left:139px;top:247px;width:1px;height:23px;background:#8A8A8A"></div><div class="a" style="left:344px;top:247px;width:1px;height:23px;background:#8A8A8A"></div><div class="a" style="left:533px;top:247px;width:1px;height:23px;background:#8A8A8A"></div><div class="a" style="left:698px;top:247px;width:1px;height:23px;background:#8A8A8A"></div><div class="a" style="left:798px;top:247px;width:1px;height:23px;background:#8A8A8A"></div><div class="a" style="left:897px;top:247px;width:1px;height:23px;background:#8A8A8A"></div><div class="a cb" style="left:83px;top:251px"></div><div class="a gd n" style="left:141px;top:252px">201409260000100128110609</div><div class="a gd" style="left:346px;top:254px">盐酸多西环素粉（水产用）</div><div class="a gd" style="left:535px;top:254px">兽药字（<span class="n">2013</span>）<span class="n">190999092</span></div><div class="a gd" style="left:700px;top:254px">金水动保</div><div class="a gd n" style="left:800px;top:252px">020-37420552</div><div class="a" style="left:0px;top:270px;width:39px;height:23px;background:#D4D0C8"></div><div class="a" style="left:2px;top:270px;width:37px;height:1px;background:#FFFFFF"></div><div class="a" style="left:0px;top:270px;width:1px;height:23px;background:#FFFFFF"></div><div class="a" style="left:2px;top:292px;width:37px;height:1px;background:#808080"></div><div class="a" style="left:39px;top:270px;width:1px;height:23px;background:#808080"></div><div class="a" style="left:40px;top:270px;width:857px;height:22px;background:#FFFFFF"></div><div class="a" style="left:40px;top:292px;width:858px;height:1px;background:#8A8A8A"></div><div class="a" style="left:139px;top:270px;width:1px;height:23px;background:#8A8A8A"></div><div class="a" style="left:344px;top:270px;width:1px;height:23px;background:#8A8A8A"></div><div class="a" style="left:533px;top:270px;width:1px;height:23px;background:#8A8A8A"></div><div class="a" style="left:698px;top:270px;width:1px;height:23px;background:#8A8A8A"></div><div class="a" style="left:798px;top:270px;width:1px;height:23px;background:#8A8A8A"></div><div class="a" style="left:897px;top:270px;width:1px;height:23px;background:#8A8A8A"></div><div class="a cb" style="left:83px;top:274px"></div><div class="a gd n" style="left:141px;top:275px">201409260000100128120908</div><div class="a gd" style="left:346px;top:277px">盐酸多西环素粉（水产用）</div><div class="a gd" style="left:535px;top:277px">兽药字（<span class="n">2013</span>）<span class="n">190999092</span></div><div class="a gd" style="left:700px;top:277px">金水动保</div><div class="a gd n" style="left:800px;top:275px">020-37420552</div><div class="a" style="left:0px;top:293px;width:39px;height:23px;background:#D4D0C8"></div><div class="a" style="left:2px;top:293px;width:37px;height:1px;background:#FFFFFF"></div><div class="a" style="left:0px;top:293px;width:1px;height:23px;background:#FFFFFF"></div><div class="a" style="left:2px;top:315px;width:37px;height:1px;background:#808080"></div><div class="a" style="left:39px;top:293px;width:1px;height:23px;background:#808080"></div><div class="a" style="left:40px;top:293px;width:857px;height:22px;background:#FFFFFF"></div><div class="a" style="left:40px;top:315px;width:858px;height:1px;background:#8A8A8A"></div><div class="a" style="left:139px;top:293px;width:1px;height:23px;background:#8A8A8A"></div><div class="a" style="left:344px;top:293px;width:1px;height:23px;background:#8A8A8A"></div><div class="a" style="left:533px;top:293px;width:1px;height:23px;background:#8A8A8A"></div><div class="a" style="left:698px;top:293px;width:1px;height:23px;background:#8A8A8A"></div><div class="a" style="left:798px;top:293px;width:1px;height:23px;background:#8A8A8A"></div><div class="a" style="left:897px;top:293px;width:1px;height:23px;background:#8A8A8A"></div><div class="a cb" style="left:83px;top:297px"></div><div class="a gd n" style="left:141px;top:298px">201409260000100128130918</div><div class="a gd" style="left:346px;top:300px">盐酸多西环素粉（水产用）</div><div class="a gd" style="left:535px;top:300px">兽药字（<span class="n">2013</span>）<span class="n">190999092</span></div><div class="a gd" style="left:700px;top:300px">金水动保</div><div class="a gd n" style="left:800px;top:298px">020-37420552</div><div class="a" style="left:0px;top:316px;width:39px;height:23px;background:#D4D0C8"></div><div class="a" style="left:2px;top:316px;width:37px;height:1px;background:#FFFFFF"></div><div class="a" style="left:0px;top:316px;width:1px;height:23px;background:#FFFFFF"></div><div class="a" style="left:2px;top:338px;width:37px;height:1px;background:#808080"></div><div class="a" style="left:39px;top:316px;width:1px;height:23px;background:#808080"></div><div class="a" style="left:40px;top:316px;width:857px;height:22px;background:#FFFFFF"></div><div class="a" style="left:40px;top:338px;width:858px;height:1px;background:#8A8A8A"></div><div class="a" style="left:139px;top:316px;width:1px;height:23px;background:#8A8A8A"></div><div class="a" style="left:344px;top:316px;width:1px;height:23px;background:#8A8A8A"></div><div class="a" style="left:533px;top:316px;width:1px;height:23px;background:#8A8A8A"></div><div class="a" style="left:698px;top:316px;width:1px;height:23px;background:#8A8A8A"></div><div class="a" style="left:798px;top:316px;width:1px;height:23px;background:#8A8A8A"></div><div class="a" style="left:897px;top:316px;width:1px;height:23px;background:#8A8A8A"></div><div class="a cb" style="left:83px;top:320px"></div><div class="a gd n" style="left:141px;top:321px">201409260000100128140062</div><div class="a gd" style="left:346px;top:323px">盐酸多西环素粉（水产用）</div><div class="a gd" style="left:535px;top:323px">兽药字（<span class="n">2013</span>）<span class="n">190999092</span></div><div class="a gd" style="left:700px;top:323px">金水动保</div><div class="a gd n" style="left:800px;top:321px">020-37420552</div><div class="a" style="left:0px;top:339px;width:39px;height:23px;background:#D4D0C8"></div><div class="a" style="left:2px;top:339px;width:37px;height:1px;background:#FFFFFF"></div><div class="a" style="left:0px;top:339px;width:1px;height:23px;background:#FFFFFF"></div><div class="a" style="left:2px;top:361px;width:37px;height:1px;background:#808080"></div><div class="a" style="left:39px;top:339px;width:1px;height:23px;background:#808080"></div><div class="a" style="left:40px;top:339px;width:857px;height:22px;background:#FFFFFF"></div><div class="a" style="left:40px;top:361px;width:858px;height:1px;background:#8A8A8A"></div><div class="a" style="left:139px;top:339px;width:1px;height:23px;background:#8A8A8A"></div><div class="a" style="left:344px;top:339px;width:1px;height:23px;background:#8A8A8A"></div><div class="a" style="left:533px;top:339px;width:1px;height:23px;background:#8A8A8A"></div><div class="a" style="left:698px;top:339px;width:1px;height:23px;background:#8A8A8A"></div><div class="a" style="left:798px;top:339px;width:1px;height:23px;background:#8A8A8A"></div><div class="a" style="left:897px;top:339px;width:1px;height:23px;background:#8A8A8A"></div><div class="a cb" style="left:83px;top:343px"></div><div class="a gd n" style="left:141px;top:344px">201409260000100128150753</div><div class="a gd" style="left:346px;top:346px">盐酸多西环素粉（水产用）</div><div class="a gd" style="left:535px;top:346px">兽药字（<span class="n">2013</span>）<span class="n">190999092</span></div><div class="a gd" style="left:700px;top:346px">金水动保</div><div class="a gd n" style="left:800px;top:344px">020-37420552</div><div class="a arrowsel" style="left:5px;top:24px"></div><div class="a" style="left:943px;top:0px;width:16px;height:347px;background:#F8F8F8"></div><div class="a" style="left:943px;top:0px;width:1px;height:347px;background:#FFFFFF"></div><div class="a sbb" style="left:944px;top:0px;width:14px;height:13px"><svg width="14" height="13" style="position:absolute;left:-1px;top:-1px"><path d="M2.5 8.5 L6.5 4.5 L10.5 8.5" fill="none" stroke="#4A5E80" stroke-width="2"/></svg></div><div class="a" style="left:944px;top:13px;width:14px;height:1px;background:#FFFFFF"></div><div class="a" style="left:944px;top:14px;width:14px;height:1px;background:#98B2E0"></div><div class="a sbb" style="left:944px;top:16px;width:14px;height:20px"></div><div class="a" style="left:944px;top:36px;width:14px;height:1px;background:#98B2E0"></div><div class="a sbb" style="left:944px;top:332px;width:14px;height:14px"><svg width="14" height="14" style="position:absolute;left:-1px;top:-1px"><path d="M2.5 5 L6.5 9 L10.5 5" fill="none" stroke="#4A5E80" stroke-width="2"/></svg></div></div><!--gridend-->
</body></html>
